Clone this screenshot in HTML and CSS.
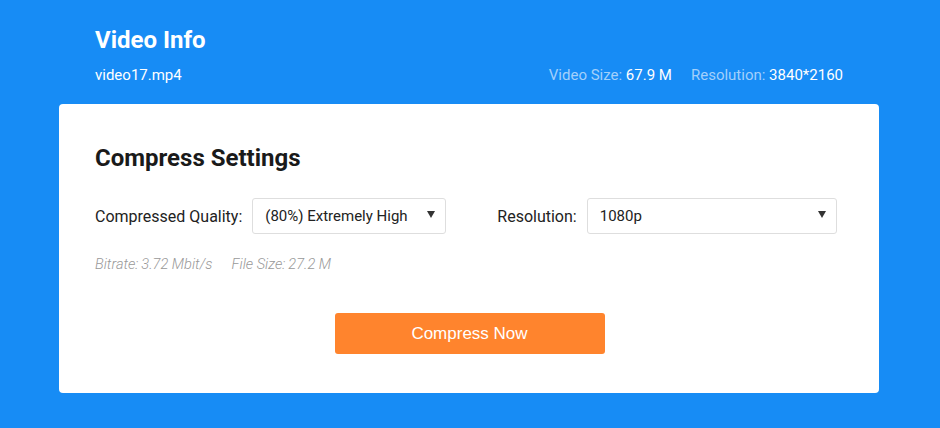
FILE: index.html
```html
<!DOCTYPE html>
<html>
<head>
<meta charset="utf-8">
<link rel="stylesheet" href="styles.css">
</head>
<body>
<div class="page">
  <header class="info">
    <h1 class="info-title">Video Info</h1>
    <div class="info-row">
      <span class="file-name">video17.mp4</span>
      <div class="meta">
        <span class="meta-item"><span class="meta-label">Video Size:</span> 67.9 M</span>
        <span class="meta-item"><span class="meta-label">Resolution:</span> 3840*2160</span>
      </div>
    </div>
  </header>
  <section class="card">
    <h2 class="card-title">Compress Settings</h2>
    <div class="fields">
      <label class="field">
        <span class="field-label">Compressed Quality:</span>
        <span class="select select-quality"><span>(80%) Extremely High</span><span class="caret"></span></span>
      </label>
      <label class="field field-res">
        <span class="field-label">Resolution:</span>
        <span class="select select-res"><span>1080p</span><span class="caret"></span></span>
      </label>
    </div>
    <div class="stats">
      <span>Bitrate:&thinsp;3.72 Mbit/s</span>
      <span>File Size:&thinsp;27.2 M</span>
    </div>
    <div class="actions">
      <button class="btn">Compress Now</button>
    </div>
  </section>
</div>
</body>
</html>
```

FILE: styles.css
```css
html, body {
  margin: 0;
  padding: 0;
}
body {
  background: #178cf5;
  font-family: Roboto, "Liberation Sans", sans-serif;
  width: 940px;
  height: 428px;
  overflow: hidden;
}
.page {
  padding: 0 0 0 59px;
}
.info {
  width: 784px;
  padding: 25px 0 0 36px;
  height: 104px;
  box-sizing: border-box;
  color: #fff;
}
.info-title {
  margin: 0;
  font-size: 24px;
  font-weight: 700;
  line-height: 30px;
}
.info-row {
  display: flex;
  justify-content: space-between;
  align-items: center;
  margin-top: 10px;
  font-size: 15px;
  line-height: 20px;
}
.meta {
  display: flex;
  gap: 19px;
}
.meta-label {
  color: #a3d0fb;
}
.card {
  width: 820px;
  height: 289px;
  box-sizing: border-box;
  background: #fff;
  border-radius: 4px;
  padding: 40px 42px 0 36px;
}
.card-title {
  margin: 0;
  font-size: 24px;
  font-weight: 700;
  line-height: 28px;
  color: #1a1a1a;
}
.fields {
  display: flex;
  align-items: center;
  margin-top: 26px;
  gap: 51px;
}
.field {
  display: flex;
  align-items: center;
  gap: 10px;
}
.field-label {
  font-size: 16px;
  color: #222;
}
.select {
  display: flex;
  align-items: center;
  justify-content: space-between;
  height: 36px;
  box-sizing: border-box;
  border: 1px solid #dedede;
  border-radius: 3px;
  padding: 0 10px 0 12px;
  font-size: 15px;
  color: #222;
}
.select-quality { width: 194px; }
.select-res { width: 250px; }
.caret {
  width: 0;
  height: 0;
  border-left: 4px solid transparent;
  border-right: 4px solid transparent;
  border-top: 7px solid #333;
  margin-top: -3px;
}
.stats {
  display: flex;
  gap: 19px;
  margin-top: 22px;
  font-size: 14.6px;
  line-height: 16px;
  font-style: italic;
  font-weight: 300;
  color: #999;
}
.actions {
  display: flex;
  justify-content: center;
  margin-top: 41px;
}
.btn {
  width: 270px;
  height: 41px;
  border: none;
  border-radius: 3px;
  background: #ff842d;
  color: #fff;
  font-family: "Liberation Sans", Arial, sans-serif;
  font-size: 17px;
  margin-left: 7px;
}
```
